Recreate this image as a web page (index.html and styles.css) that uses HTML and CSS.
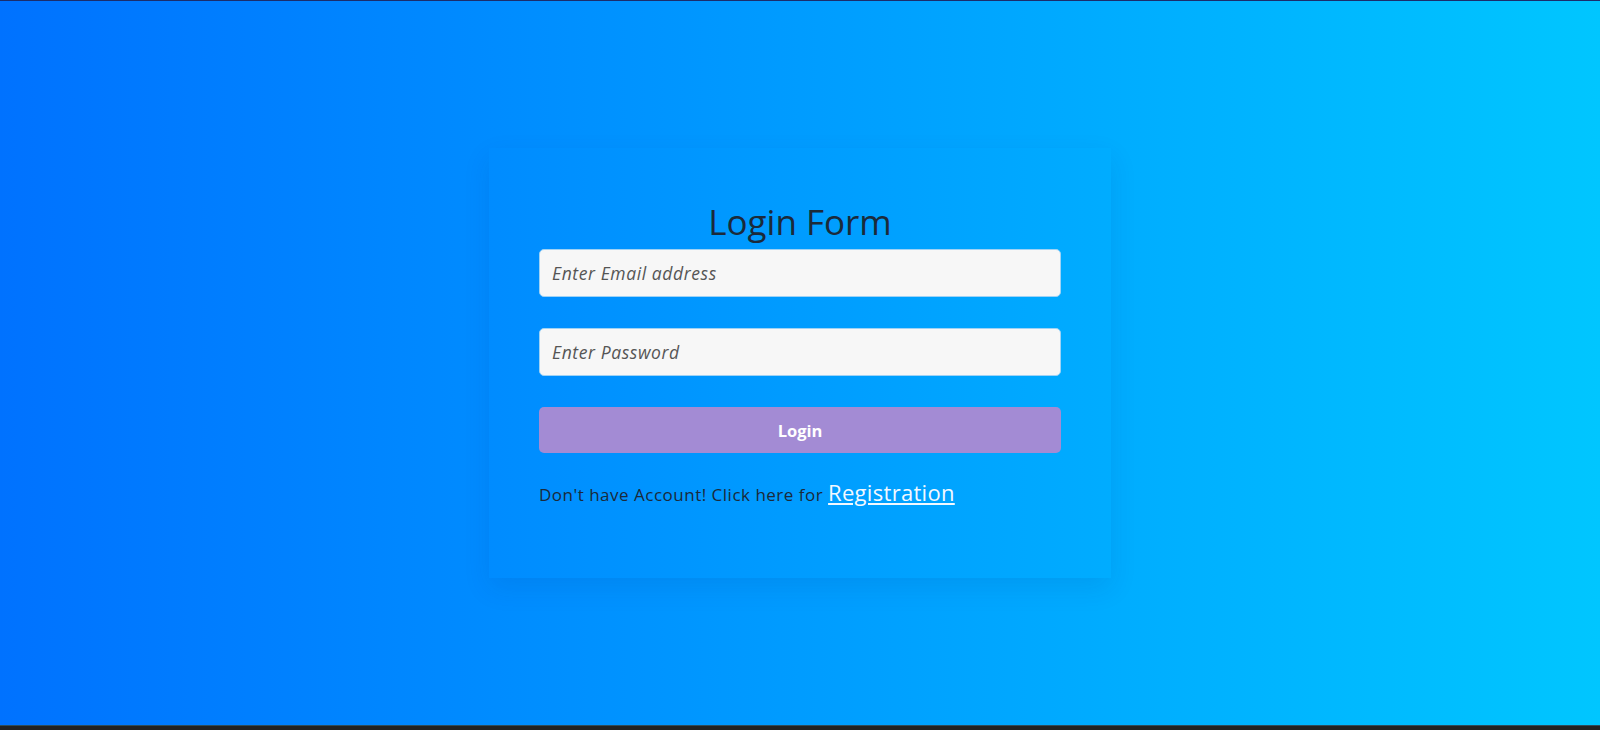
FILE: index.html
```html
<!DOCTYPE html>
<html lang="en">
<head>
<meta charset="utf-8">
<title>Login Form</title>
<link rel="stylesheet" href="styles.css">
</head>
<body>
<div class="topline"></div>
<main class="stage">
  <form class="card">
    <h1 class="title">Login Form</h1>
    <input class="field" type="email" placeholder="Enter Email address">
    <input class="field" type="password" placeholder="Enter Password">
    <button class="btn" type="button">Login</button>
    <p class="note">Don't have Account! Click here for <a class="reg" href="#">Registration</a></p>
  </form>
</main>
<div class="bottombar"></div>
</body>
</html>
```
FILE: styles.css
```css
* { box-sizing: border-box; }
html, body { margin: 0; padding: 0; height: 730px; overflow: hidden; }
body {
  display: flex;
  flex-direction: column;
  font-family: "Open Sans", "Noto Sans", sans-serif;
  background: #222;
}
.topline { height: 1px; background: #1b2d6b; }
.stage {
  height: 724px;
  background: linear-gradient(to right, #0072ff, #00c6ff);
  display: flex;
  justify-content: center;
  align-items: flex-start;
  padding-top: 147px;
}
.card {
  width: 622px;
  height: 430px;
  padding: 53px 50px 0;
  display: flex;
  flex-direction: column;
  box-shadow: 0 10px 25px rgba(0, 40, 120, 0.10);
}
.title {
  margin: 0 0 6px;
  text-align: center;
  font-size: 35px;
  font-weight: 500;
  line-height: 42px;
  color: #1b2a3a;
}
.field {
  height: 48px;
  width: 100%;
  margin: 0 0 31px;
  padding: 0 12px;
  border: 1px solid #9fd2f5;
  border-radius: 5px;
  background: #f7f7f7;
  font-family: inherit;
  font-size: 17.5px;
  letter-spacing: 0.6px;
  font-style: italic;
  color: #555;
}
.field::placeholder { color: #555; font-style: italic; }
.btn {
  height: 46px;
  width: 100%;
  margin-top: 0;
  border: none;
  border-radius: 5px;
  background: #a38bd4;
  color: #fff;
  font-family: inherit;
  font-size: 16.5px;
  font-weight: 700;
}
.note {
  margin: 24px 0 0;
  font-size: 17px;
  font-weight: 500;
  letter-spacing: 0.5px;
  color: #1b2a3a;
}
.reg {
  font-size: 22px;
  letter-spacing: 0.3px;
  font-weight: 500;
  color: #f2f8ff;
  text-decoration: underline;
}
.bottombar {
  flex: 1;
  background: #222;
  border-top: 1px solid #2e4c5a;
}
```
